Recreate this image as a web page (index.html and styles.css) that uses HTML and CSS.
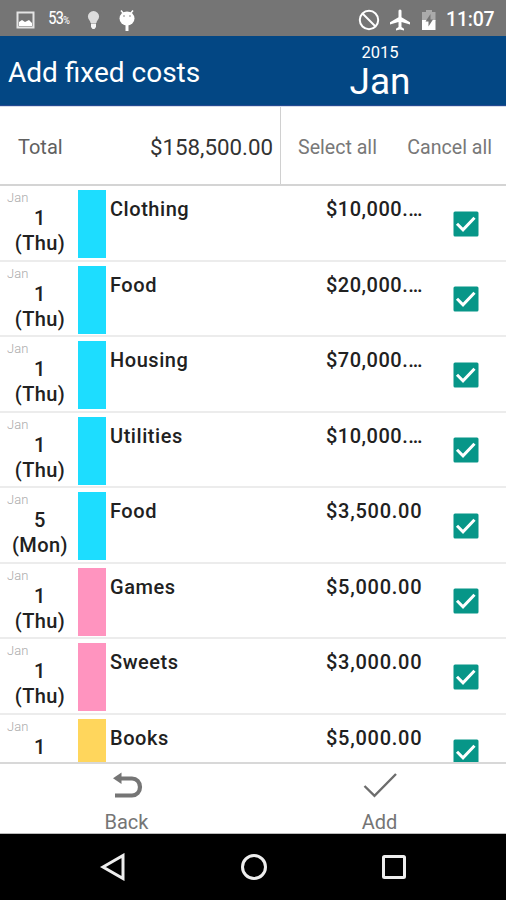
FILE: index.html
```html
<!DOCTYPE html>
<html lang="en">
<head>
<meta charset="utf-8">
<title>Add fixed costs</title>
<link rel="stylesheet" href="styles.css">
</head>
<body>
<svg class="defs" aria-hidden="true">
  <symbol id="checked" viewBox="0 0 26 26"><rect x=".5" y=".5" width="25" height="25" rx="1.5" fill="#079688"/><path d="M4 12.8l6 6L21.5 6.800" fill="none" stroke="#fff" stroke-width="3"/></symbol>
</svg>
<div class="screen">
  <div class="status">
    <svg class="left-icons" width="140" height="36" viewBox="0 0 140 36">
      <rect x="17.5" y="10.5" width="16" height="15" fill="none" stroke="#e4e4e4" stroke-width="2"/>
      <path d="M19 24v-4l3-2 3 2 4-2 3 3v3z" fill="#fff"/>
      <path d="M93.500 9a5.600 5.600 0 0 0-5.600 5.600c0 3 2.700 4.400 2.700 6.400h5.800c0-2 2.700-3.400 2.700-6.400a5.600 5.600 0 0 0-5.600-5.600z" fill="#dcdcdc"/>
      <path d="M91 21.500h5v3.500l-1.500 2h-2L91 25z" fill="#f4f4f4"/>
      <path d="M121 8.500l2.500 3M133 8.500l-2.500 3" stroke="#fff" stroke-width="1.500"/>
      <ellipse cx="127" cy="16.500" rx="7.500" ry="7" fill="#fff"/>
      <path d="M127 22v7" stroke="#fff" stroke-width="3"/>
      <circle cx="124" cy="14" r=".8" fill="#777"/><circle cx="130" cy="14" r=".8" fill="#777"/>
    </svg>
    <span class="percent">53<small>%</small></span>
    <svg class="right-icons" width="82" height="36" viewBox="0 0 82 36">
      <circle cx="13" cy="18" r="9.200" fill="none" stroke="#fff" stroke-width="2"/>
      <path d="M6.500 11.500l13 13" stroke="#fff" stroke-width="2"/>
      <path d="M44 7.500c-1 0-1.500.8-1.500 1.800v6l-8.500 5v2.200l8.500-2.500v5l-2.500 1.800v1.700l4-1 4 1v-1.700l-2.500-1.800v-5l8.500 2.500v-2.200l-8.500-5v-6c0-1-.5-1.800-1.500-1.800z" fill="#fff"/>
      <path d="M66 10h4V8h6v2h3.500v9H66z" fill="#aaa"/><path d="M66 18h13.500v10H66z" fill="#fff"/>
      <path d="M74.500 12l-5 7.500h3v5l4.500-7h-2.500z" fill="#757575"/>
    </svg>
    <span class="clock">11:07</span>
  </div>
  <header class="header">
    <h1 class="title">Add fixed costs</h1>
    <div class="period"><span class="year">2015</span><span class="month">Jan</span></div>
  </header>
  <section class="summary">
    <div class="total"><span class="total-label">Total</span><span class="total-value">$158,500.00</span></div>
    <div class="choices"><span class="select-all">Select all</span><span class="cancel-all">Cancel all</span></div>
  </section>
  <main class="list">
    <div class="row"><div class="date"><small>Jan</small><b>1</b><b>(Thu)</b></div><i class="bar cyan"></i><span class="name">Clothing</span><span class="amount cut">$10,000.…</span><svg class="check"><use href="#checked"/></svg></div>
    <div class="row"><div class="date"><small>Jan</small><b>1</b><b>(Thu)</b></div><i class="bar cyan"></i><span class="name">Food</span><span class="amount cut">$20,000.…</span><svg class="check"><use href="#checked"/></svg></div>
    <div class="row"><div class="date"><small>Jan</small><b>1</b><b>(Thu)</b></div><i class="bar cyan"></i><span class="name">Housing</span><span class="amount cut">$70,000.…</span><svg class="check"><use href="#checked"/></svg></div>
    <div class="row"><div class="date"><small>Jan</small><b>1</b><b>(Thu)</b></div><i class="bar cyan"></i><span class="name">Utilities</span><span class="amount cut">$10,000.…</span><svg class="check"><use href="#checked"/></svg></div>
    <div class="row"><div class="date"><small>Jan</small><b>5</b><b>(Mon)</b></div><i class="bar cyan"></i><span class="name">Food</span><span class="amount">$3,500.00</span><svg class="check"><use href="#checked"/></svg></div>
    <div class="row"><div class="date"><small>Jan</small><b>1</b><b>(Thu)</b></div><i class="bar pink"></i><span class="name">Games</span><span class="amount">$5,000.00</span><svg class="check"><use href="#checked"/></svg></div>
    <div class="row"><div class="date"><small>Jan</small><b>1</b><b>(Thu)</b></div><i class="bar pink"></i><span class="name">Sweets</span><span class="amount">$3,000.00</span><svg class="check"><use href="#checked"/></svg></div>
    <div class="row"><div class="date"><small>Jan</small><b>1</b></div><i class="bar yellow"></i><span class="name">Books</span><span class="amount">$5,000.00</span><svg class="check"><use href="#checked"/></svg></div>
  </main>
  <footer class="actions">
    <div class="action"><svg width="34" height="34" viewBox="0 0 34 34"><path d="M9 9.500h13c4.500 0 8 3.500 8 8.500s-3.500 8.500-8 8.500H5" fill="none" stroke="#757575" stroke-width="4.200"/><path d="M3 9.300l8.500-5.800v11.500z" fill="#757575"/></svg><span>Back</span></div>
    <div class="action"><svg width="34" height="34" viewBox="0 0 34 34"><path d="M1.500 17l10 9.800L33 5" fill="none" stroke="#6d6d6d" stroke-width="2.400"/></svg><span>Add</span></div>
  </footer>
  <nav class="nav">
    <svg width="28" height="28" viewBox="0 0 28 28"><path d="M4 14L24 2.500v23z"/></svg>
    <svg width="28" height="28" viewBox="0 0 28 28"><circle cx="14" cy="14" r="11.500"/></svg>
    <svg width="28" height="28" viewBox="0 0 28 28"><rect x="3.500" y="3.500" width="21" height="21" rx="1"/></svg>
  </nav>
</div>
</body>
</html>
```

FILE: styles.css
```css
* { box-sizing: border-box; }
body { margin: 0; background: #fff; font-family: Roboto, sans-serif; color: #212121; }
.defs { display: none; }
.screen { width: 506px; height: 900px; display: flex; flex-direction: column; overflow: hidden; }
svg { display: block; flex: none; }

.status { height: 36px; flex: none; display: grid; grid-template-columns: 140px 216px 82px 68px; background: #757575; color: #fff; align-items: center; }
.left-icons { grid-column: 1; grid-row: 1; }
.percent { grid-column: 1; grid-row: 1; padding-left: 48px; font: 17.500px/36px "Roboto Condensed", Roboto, sans-serif; letter-spacing: -1.2px; }
.percent small { font-size: 11px; }
.right-icons { grid-column: 3; }
.clock { padding: 0 0 0 8px; font-size: 19.500px; font-weight: 500; line-height: 36px; letter-spacing: -.2px; }

.header { height: 70px; flex: none; display: flex; background: #034784; border-bottom: 1px solid #244a92; color: #fff; }
.title { width: 254px; margin: 0; padding-left: 8px; font-size: 28px; font-weight: 400; line-height: 73px; }
.period { width: 252px; display: flex; flex-direction: column; align-items: center; padding-top: 7px; }
.year { font-size: 16.500px; line-height: 20px; }
.month { font-size: 37px; line-height: 37px; }

.summary { height: 80px; flex: none; display: flex; border-top: 1px solid #d7deea; border-bottom: 2px solid #d4d4d4; line-height: 81px; }
.total { width: 281px; flex: none; display: flex; justify-content: space-between; padding: 0 7px 0 18px; border-right: 1px solid #d0d0d0; }
.total-label { font-size: 20px; color: #606060; }
.total-value { font-size: 22.300px; color: #333; }
.choices { flex: 1; display: flex; justify-content: space-between; padding: 0 14px 0 17px; font-size: 19.600px; color: #787878; }

.list { height: 576px; flex: none; overflow: hidden; }
.row { height: 75.500px; display: grid; grid-template-columns: 78px 28px 220px 127px 26px; border-bottom: 2px solid #ececec; }
.date { display: flex; flex-direction: column; align-items: center; width: 80px; padding-top: 4px; }
.date small { align-self: flex-start; padding-left: 7px; font-size: 13px; line-height: 16px; font-weight: 300; color: #aaa; }
.date b { font-size: 20px; line-height: 25px; font-weight: 500; letter-spacing: .4px; }
.bar { height: 68px; margin-top: 4px; }
.cyan { background: #1dddff; }
.pink { background: #ff94bf; }
.yellow { background: #ffd65c; }
.name, .amount { font-size: 20px; line-height: 24px; font-weight: 500; padding-top: 11px; letter-spacing: .55px; }
.name { padding-left: 4px; }
.amount { letter-spacing: .75px; }
.cut { letter-spacing: .5px; }
.check { width: 26px; height: 26px; margin-top: 24.500px; }

.actions { height: 72px; flex: none; display: flex; border-top: 2px solid #d8d8d8; border-bottom: 1px solid #bbb; }
.action { width: 50%; display: flex; flex-direction: column; align-items: center; padding-top: 5px; font-size: 20px; line-height: 38px; color: #757575; }
.nav { height: 66px; flex: none; display: flex; justify-content: space-between; padding: 19px 98px 0 99px; background: #000; }
.nav svg { fill: none; stroke: #eee; stroke-width: 3; }
```
